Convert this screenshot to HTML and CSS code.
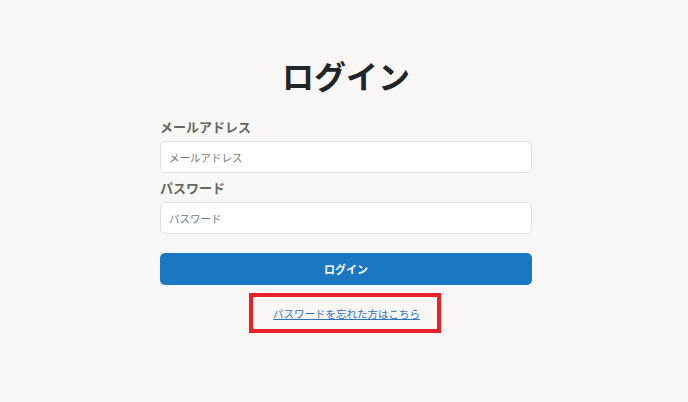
FILE: index.html
```html
<!DOCTYPE html>
<html lang="ja">
<head>
<meta charset="utf-8">
<title>ログイン</title>
<link rel="stylesheet" href="styles.css">
</head>
<body>
<main class="page">
  <h1 class="title">ログイン</h1>
  <form class="form">
    <label class="label" for="email">メールアドレス</label>
    <input class="input" id="email" type="email" placeholder="メールアドレス">
    <label class="label" for="password">パスワード</label>
    <input class="input" id="password" type="password" placeholder="パスワード">
    <button class="button" type="button">ログイン</button>
  </form>
  <div class="forgot">
    <a class="forgot-link" href="#">パスワードを忘れた方はこちら</a>
  </div>
</main>
</body>
</html>
```

FILE: styles.css
```css
html, body {
  margin: 0;
  padding: 0;
  background: #f8f7f6;
  font-family: "Noto Sans CJK JP", "Noto Sans", sans-serif;
}
.page {
  display: flex;
  flex-direction: column;
  align-items: center;
  padding: 50px 0 0 4px;
}
.title {
  margin: 0;
  font-size: 32px;
  line-height: 50px;
  font-weight: 700;
  color: #212529;
}
.form {
  width: 372px;
  display: flex;
  flex-direction: column;
  margin-top: 17px;
}
.label {
  font-size: 13px;
  font-weight: 700;
  color: #666;
  line-height: 20px;
  margin-bottom: 4px;
}
.input {
  box-sizing: border-box;
  height: 32px;
  border: 1px solid #e1e1e1;
  border-radius: 5px;
  background: #fff;
  padding: 0 8px;
  font-family: inherit;
  font-size: 10.5px;
  margin-bottom: 5px;
  outline: none;
}
.input::placeholder {
  color: #777;
}
.button {
  margin-top: 14px;
  height: 32px;
  border: none;
  border-radius: 5px;
  background: #1a78c2;
  color: #fff;
  font-family: inherit;
  font-size: 11px;
  font-weight: 700;
}
.forgot {
  box-sizing: border-box;
  width: 192px;
  height: 40px;
  margin: 8px 0 0 -2px;
  border: 4px solid #e8202a;
  display: flex;
  align-items: center;
  justify-content: center;
  padding-left: 3px;
}
.forgot-link {
  font-size: 10.5px;
  color: #2f73bb;
  text-decoration: underline;
}
```
